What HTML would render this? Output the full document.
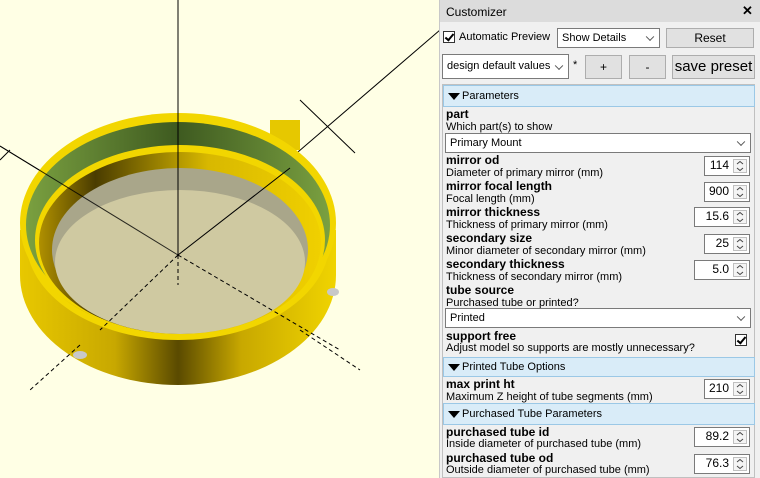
<!DOCTYPE html>
<html><head><meta charset="utf-8"><style>
body{margin:0;width:760px;height:478px;overflow:hidden;background:#ffffe5;font-family:"Liberation Sans",sans-serif;font-size:11px;color:#000;position:relative}
.a{position:absolute;white-space:nowrap}
#panel{position:absolute;left:439px;top:0;width:321px;height:478px;background:#f0f0f0;border-left:1px solid #c8c8c8}
.btn{position:absolute;background:#e1e1e1;border:1px solid #adadad;text-align:center;box-sizing:border-box;font-size:12px}
.sel{position:absolute;background:#fff;border:1px solid #7a7a7a;box-sizing:border-box;font-size:11px;padding-left:4px}
.sel:after{content:"";position:absolute;right:6px;top:50%;width:5px;height:5px;border-right:1.3px solid #555;border-bottom:1.3px solid #555;transform:translateY(-70%) rotate(45deg)}
.hdr{position:absolute;left:443px;width:312px;background:#d9ecf8;border:1px solid #9bc8e6;box-sizing:border-box;font-size:11px;padding-left:18px}
.hdr:before{content:"";position:absolute;left:4px;top:50%;margin-top:-3px;border-left:6px solid transparent;border-right:6px solid transparent;border-top:7px solid #000}
.b{font-weight:bold;font-size:12px}
.spin{position:absolute;background:#fff;border:1px solid #7a7a7a;box-sizing:border-box;font-size:12px;text-align:right;padding-right:20px;line-height:17px}
.spin svg{position:absolute;right:2px;top:2px}
.chk{position:absolute;width:12px;height:12px;border:1px solid #333;background:#fff;box-sizing:border-box}
.chk:after{content:"";position:absolute;left:3px;top:0px;width:3px;height:7px;border-right:2px solid #000;border-bottom:2px solid #000;transform:rotate(40deg)}
</style></head><body>
<svg class="a" style="left:0;top:0" width="440" height="478">
<defs>
<linearGradient id="y" x1="0" x2="1"><stop offset="0" stop-color="#e8c800"/><stop offset=".3" stop-color="#c8a800"/><stop offset=".5" stop-color="#5a4a00"/><stop offset=".7" stop-color="#c8a800"/><stop offset="1" stop-color="#f0d400"/></linearGradient>
<linearGradient id="g" x1="0" x2="1"><stop offset="0" stop-color="#7aa040"/><stop offset=".5" stop-color="#3e5a20"/><stop offset="1" stop-color="#7aa040"/></linearGradient>
<linearGradient id="in" x1="0" x2="1"><stop offset="0" stop-color="#b09000"/><stop offset=".2" stop-color="#4a3c00"/><stop offset=".6" stop-color="#d8b800"/><stop offset="1" stop-color="#f0d000"/></linearGradient>
</defs>
<g stroke="#000" stroke-width="1">
<line x1="0" y1="146" x2="178" y2="255"/><line x1="178" y1="0" x2="178" y2="255"/>
<line x1="178" y1="255" x2="440" y2="30"/>
<line x1="300" y1="100" x2="355" y2="153"/>
<line x1="0" y1="160" x2="10" y2="150"/>
</g>
<path d="M20 230 L20 275 A158 110 0 0 0 336 275 L336 230 Z" fill="url(#y)"/>
<rect x="270" y="120" width="30" height="30" fill="#e6c800"/>
<ellipse cx="178" cy="223" rx="158" ry="110" fill="#f2d600"/>
<ellipse cx="178" cy="225" rx="152" ry="103" fill="url(#g)"/>
<path d="M26 233 A152 100 0 0 0 330 233 L330 240 A152 100 0 0 1 26 240Z" fill="#f2d600"/>
<ellipse cx="180" cy="240" rx="145" ry="95" fill="#f2d600"/>
<ellipse cx="180" cy="243" rx="141" ry="91" fill="url(#in)"/>
<ellipse cx="180" cy="250" rx="128" ry="82" fill="#a9a68a"/>
<ellipse cx="180" cy="262" rx="125" ry="72" fill="#cfc9a1"/>
<g stroke="#000" stroke-width="1">
<line x1="0" y1="146" x2="178" y2="255" opacity=".8"/><line x1="178" y1="100" x2="178" y2="255"/>
<line x1="178" y1="255" x2="290" y2="168"/>
</g>
<g stroke="#000" stroke-dasharray="4 3"><line x1="178" y1="255" x2="100" y2="330"/><line x1="178" y1="255" x2="340" y2="350"/><line x1="178" y1="255" x2="178" y2="285"/><line x1="80" y1="345" x2="30" y2="390"/><line x1="300" y1="330" x2="360" y2="370"/></g>
<ellipse cx="80" cy="355" rx="7" ry="4" fill="#c8c8c8"/><ellipse cx="333" cy="292" rx="6" ry="4" fill="#c8c8c8"/>
</svg>
<div id="panel"></div>
<div class="a" style="left:440px;top:0;width:320px;height:22px;background:#dcdcdc"></div>
<div class="a" style="left:446px;top:5px;font-size:12px">Customizer</div>
<div class="a" style="left:742px;top:3px;font-size:13px;font-weight:bold">✕</div>
<div class="chk" style="left:443px;top:31px"></div>
<div class="a" style="left:459px;top:31px">Automatic Preview</div>
<div class="sel" style="left:557px;top:28px;width:103px;height:20px;line-height:18px">Show Details</div>
<div class="btn" style="left:666px;top:28px;width:88px;height:20px;line-height:18px">Reset</div>
<div class="sel" style="left:442px;top:54px;width:127px;height:25px;line-height:23px">design default values</div>
<div class="a" style="left:573px;top:59px">*</div>
<div class="btn" style="left:585px;top:55px;width:37px;height:24px;line-height:22px">+</div>
<div class="btn" style="left:629px;top:55px;width:37px;height:24px;line-height:22px">-</div>
<div class="btn" style="left:672px;top:55px;width:83px;height:24px;line-height:22px;font-size:15px">save preset</div>
<div class="a" style="left:442px;top:84px;width:313px;height:394px;border:1px solid #c0c0c0;box-sizing:border-box"></div>
<div class="hdr" style="top:85px;height:22px;line-height:21px">Parameters</div>
<div class="a b" style="left:446px;top:107px">part</div>
<div class="a" style="left:446px;top:121px">Which part(s) to show</div>
<div class="sel" style="left:445px;top:133px;width:306px;height:20px;line-height:18px">Primary Mount</div>

<div class="a b" style="left:446px;top:153px">mirror od</div><div class="a" style="left:446px;top:167px">Diameter of primary mirror (mm)</div>
<div class="spin" style="left:704px;top:156px;width:46px;height:20px">114<svg width="14" height="14"><rect x=".5" y=".5" width="13" height="13" fill="#f4f4f4" stroke="#c0c0c0"/><path d="M4 5l3-2.5 3 2.5M4 9l3 2.5 3-2.5" fill="none" stroke="#444"/></svg></div>
<div class="a b" style="left:446px;top:179px">mirror focal length</div><div class="a" style="left:446px;top:193px">Focal length (mm)</div>
<div class="spin" style="left:704px;top:182px;width:46px;height:20px">900<svg width="14" height="14"><rect x=".5" y=".5" width="13" height="13" fill="#f4f4f4" stroke="#c0c0c0"/><path d="M4 5l3-2.5 3 2.5M4 9l3 2.5 3-2.5" fill="none" stroke="#444"/></svg></div>
<div class="a b" style="left:446px;top:205px">mirror thickness</div><div class="a" style="left:446px;top:219px">Thickness of primary mirror (mm)</div>
<div class="spin" style="left:694px;top:207px;width:56px;height:20px">15.6<svg width="14" height="14"><rect x=".5" y=".5" width="13" height="13" fill="#f4f4f4" stroke="#c0c0c0"/><path d="M4 5l3-2.5 3 2.5M4 9l3 2.5 3-2.5" fill="none" stroke="#444"/></svg></div>
<div class="a b" style="left:446px;top:231px">secondary size</div><div class="a" style="left:446px;top:245px">Minor diameter of secondary mirror (mm)</div>
<div class="spin" style="left:704px;top:234px;width:46px;height:20px">25<svg width="14" height="14"><rect x=".5" y=".5" width="13" height="13" fill="#f4f4f4" stroke="#c0c0c0"/><path d="M4 5l3-2.5 3 2.5M4 9l3 2.5 3-2.5" fill="none" stroke="#444"/></svg></div>
<div class="a b" style="left:446px;top:257px">secondary thickness</div><div class="a" style="left:446px;top:271px">Thickness of secondary mirror (mm)</div>
<div class="spin" style="left:694px;top:260px;width:56px;height:20px">5.0<svg width="14" height="14"><rect x=".5" y=".5" width="13" height="13" fill="#f4f4f4" stroke="#c0c0c0"/><path d="M4 5l3-2.5 3 2.5M4 9l3 2.5 3-2.5" fill="none" stroke="#444"/></svg></div>
<div class="a b" style="left:446px;top:283px">tube source</div><div class="a" style="left:446px;top:297px">Purchased tube or printed?</div>
<div class="sel" style="left:445px;top:308px;width:306px;height:20px;line-height:18px">Printed</div>
<div class="a b" style="left:446px;top:329px">support free</div><div class="a" style="left:446px;top:342px">Adjust model so supports are mostly unnecessary?</div>
<div class="chk" style="left:735px;top:334px"></div>
<div class="hdr" style="top:357px;height:20px;line-height:19px">Printed Tube Options</div>
<div class="a b" style="left:446px;top:377px">max print ht</div><div class="a" style="left:446px;top:391px">Maximum Z height of tube segments (mm)</div>
<div class="spin" style="left:704px;top:379px;width:46px;height:20px">210<svg width="14" height="14"><rect x=".5" y=".5" width="13" height="13" fill="#f4f4f4" stroke="#c0c0c0"/><path d="M4 5l3-2.5 3 2.5M4 9l3 2.5 3-2.5" fill="none" stroke="#444"/></svg></div>
<div class="hdr" style="top:403px;height:22px;line-height:21px">Purchased Tube Parameters</div>
<div class="a b" style="left:446px;top:425px">purchased tube id</div><div class="a" style="left:446px;top:438px">Inside diameter of purchased tube (mm)</div>
<div class="spin" style="left:694px;top:427px;width:56px;height:20px">89.2<svg width="14" height="14"><rect x=".5" y=".5" width="13" height="13" fill="#f4f4f4" stroke="#c0c0c0"/><path d="M4 5l3-2.5 3 2.5M4 9l3 2.5 3-2.5" fill="none" stroke="#444"/></svg></div>
<div class="a b" style="left:446px;top:451px">purchased tube od</div><div class="a" style="left:446px;top:464px">Outside diameter of purchased tube (mm)</div>
<div class="spin" style="left:694px;top:454px;width:56px;height:20px">76.3<svg width="14" height="14"><rect x=".5" y=".5" width="13" height="13" fill="#f4f4f4" stroke="#c0c0c0"/><path d="M4 5l3-2.5 3 2.5M4 9l3 2.5 3-2.5" fill="none" stroke="#444"/></svg></div>
</body></html>
